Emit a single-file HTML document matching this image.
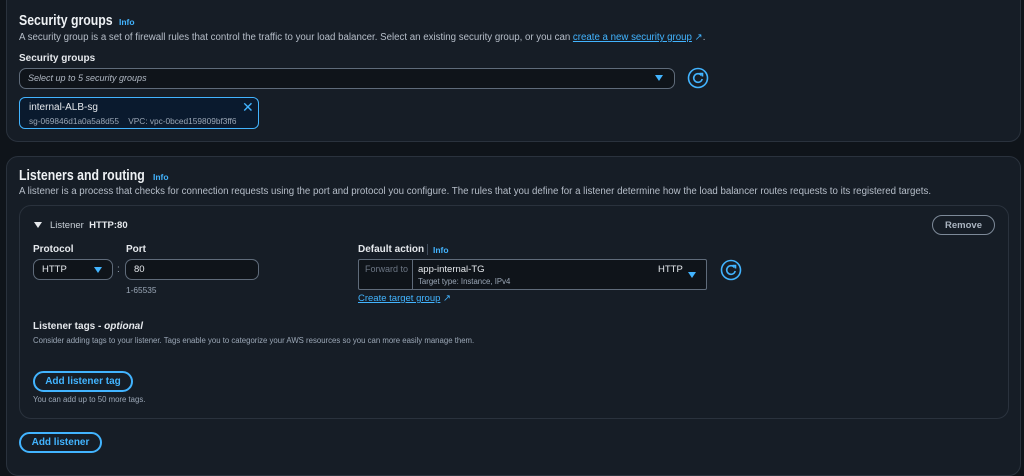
<!DOCTYPE html>
<html><head><meta charset="utf-8"><style>
*{margin:0;padding:0;box-sizing:border-box}
body{width:1024px;height:459px;overflow:hidden;background:#0f141a;font-family:"Liberation Sans",sans-serif;color:#dfe3e8;position:relative}
.a{position:absolute;white-space:nowrap}
.panel{position:absolute;background:#161d26;border:1px solid #2a323d;border-radius:12px}
.h{font-size:15px;font-weight:bold;color:#eef1f4;transform:scaleX(0.82);transform-origin:left}
.info{font-size:8.5px;font-weight:bold;color:#42b4ff}
.d{font-size:9.7px;color:#b6bec9}
.l{font-size:10px;font-weight:bold;color:#e6e9ed}
.s{font-size:8.3px;color:#9ba7b6}
.box{position:absolute;border:1px solid #5f6b7a;border-radius:7px;background:#0f141a}
.btn{position:absolute;border:2px solid #42b4ff;border-radius:12px;color:#42b4ff;font-weight:bold;font-size:10px;display:flex;align-items:center;justify-content:center}
a{color:#42b4ff;text-decoration:underline}
.tri{position:absolute;width:0;height:0;border-left:4.5px solid transparent;border-right:4.5px solid transparent;border-top:6px solid #42b4ff}
</style></head><body>
<div class="panel" style="left:6px;top:-12px;width:1015px;height:154px"></div>
<div class="a h" style="left:19px;top:12px">Security groups</div>
<div class="a info" style="left:119px;top:17px">Info</div>
<div class="a d" style="left:19px;top:32px">A security group is a set of firewall rules that control the traffic to your load balancer. Select an existing security group, or you can <a>create a new security group</a> <span style="color:#42b4ff">↗</span>.</div>
<div class="a l" style="left:19px;top:53px">Security groups</div>
<div class="box" style="left:19px;top:68px;width:656px;height:21px"></div>
<div class="a" style="left:28px;top:73px;font-size:9px;font-style:italic;color:#b0b8c3">Select up to 5 security groups</div>
<div class="tri" style="left:655px;top:75px"></div>
<svg class="a" style="left:687px;top:67px" width="22" height="22" viewBox="0 0 22 22"><circle cx="11" cy="11" r="9.5" fill="none" stroke="#42b4ff" stroke-width="1.6"/><path d="M14.5 8.5A4.3 4.3 0 1 0 15.2 12" fill="none" stroke="#42b4ff" stroke-width="1.6"/><path d="M12.5 6.5h3v3" fill="none" stroke="#42b4ff" stroke-width="1.6"/></svg>
<div class="a" style="left:19px;top:97px;width:240px;height:32px;border:1.5px solid #42b4ff;border-radius:6px;background:#0a1a2e"></div>
<div class="a" style="left:29px;top:102px;font-size:10px;color:#e6e9ed">internal-ALB-sg</div>
<div class="a s" style="left:29px;top:116px">sg-069846d1a0a5a8d55 &nbsp;&nbsp; VPC: vpc-0bced159809bf3ff6</div>
<div class="a" style="left:242px;top:99px;font-size:14px;color:#42b4ff">✕</div>

<div class="panel" style="left:6px;top:156px;width:1015px;height:320px"></div>
<div class="a h" style="left:19px;top:167px">Listeners and routing</div>
<div class="a info" style="left:153px;top:172px">Info</div>
<div class="a d" style="left:19px;top:186px">A listener is a process that checks for connection requests using the port and protocol you configure. The rules that you define for a listener determine how the load balancer routes requests to its registered targets.</div>
<div class="a" style="left:19px;top:205px;width:990px;height:214px;border:1px solid #2a323d;border-radius:12px"></div>
<div class="a" style="left:34px;top:222px;width:0;height:0;border-left:4.5px solid transparent;border-right:4.5px solid transparent;border-top:6px solid #e6e9ed"></div>
<div class="a" style="left:50px;top:220px;font-size:9.5px;color:#c9d0d8">Listener &nbsp;<b style="color:#e6e9ed">HTTP:80</b></div>
<div class="a" style="left:932px;top:215px;width:63px;height:20px;border:1.5px solid #7d8998;border-radius:11px;font-size:9.5px;font-weight:bold;color:#aab4c0;display:flex;align-items:center;justify-content:center">Remove</div>
<div class="a l" style="left:33px;top:244px">Protocol</div>
<div class="a l" style="left:126px;top:244px">Port</div>
<div class="box" style="left:33px;top:259px;width:80px;height:21px"></div>
<div class="a" style="left:42px;top:264px;font-size:9.5px;color:#e6e9ed">HTTP</div>
<div class="tri" style="left:94px;top:267px"></div>
<div class="a" style="left:117px;top:264px;font-size:10px;color:#9ba7b6">:</div>
<div class="box" style="left:125px;top:259px;width:134px;height:21px"></div>
<div class="a" style="left:134px;top:264px;font-size:9.5px;color:#e6e9ed">80</div>
<div class="a s" style="left:126px;top:285px">1-65535</div>
<div class="a l" style="left:358px;top:244px">Default action</div>
<div class="a" style="left:427px;top:244px;width:1px;height:11px;background:#414d5c"></div>
<div class="a info" style="left:433px;top:245px">Info</div>
<div class="a" style="left:358px;top:259px;width:349px;height:31px;border:1px solid #5f6b7a;border-radius:2px;background:#0f141a"></div>
<div class="a" style="left:358px;top:259px;width:55px;height:31px;border-right:1px solid #5f6b7a"></div>
<div class="a" style="left:365px;top:264px;font-size:9px;color:#6c7684">Forward to</div>
<div class="a" style="left:418px;top:264px;font-size:9.5px;color:#e6e9ed">app-internal-TG</div>
<div class="a s" style="left:418px;top:277px;font-size:7.8px">Target type: Instance, IPv4</div>
<div class="a" style="left:658px;top:264px;font-size:9.5px;color:#e6e9ed">HTTP</div>
<div class="tri" style="left:688px;top:272px"></div>
<svg class="a" style="left:720px;top:259px" width="22" height="22" viewBox="0 0 22 22"><circle cx="11" cy="11" r="9.5" fill="none" stroke="#42b4ff" stroke-width="1.6"/><path d="M14.5 8.5A4.3 4.3 0 1 0 15.2 12" fill="none" stroke="#42b4ff" stroke-width="1.6"/><path d="M12.5 6.5h3v3" fill="none" stroke="#42b4ff" stroke-width="1.6"/></svg>
<div class="a" style="left:358px;top:293px;font-size:9.5px"><a>Create target group</a> <span style="color:#42b4ff">↗</span></div>
<div class="a l" style="left:33px;top:321px">Listener tags - <i>optional</i></div>
<div class="a s" style="left:33px;top:336px;font-size:7.8px">Consider adding tags to your listener. Tags enable you to categorize your AWS resources so you can more easily manage them.</div>
<div class="btn" style="left:33px;top:371px;width:100px;height:21px">Add listener tag</div>
<div class="a s" style="left:33px;top:395px;font-size:7.8px">You can add up to 50 more tags.</div>
<div class="btn" style="left:19px;top:432px;width:83px;height:21px">Add listener</div>
</body></html>
